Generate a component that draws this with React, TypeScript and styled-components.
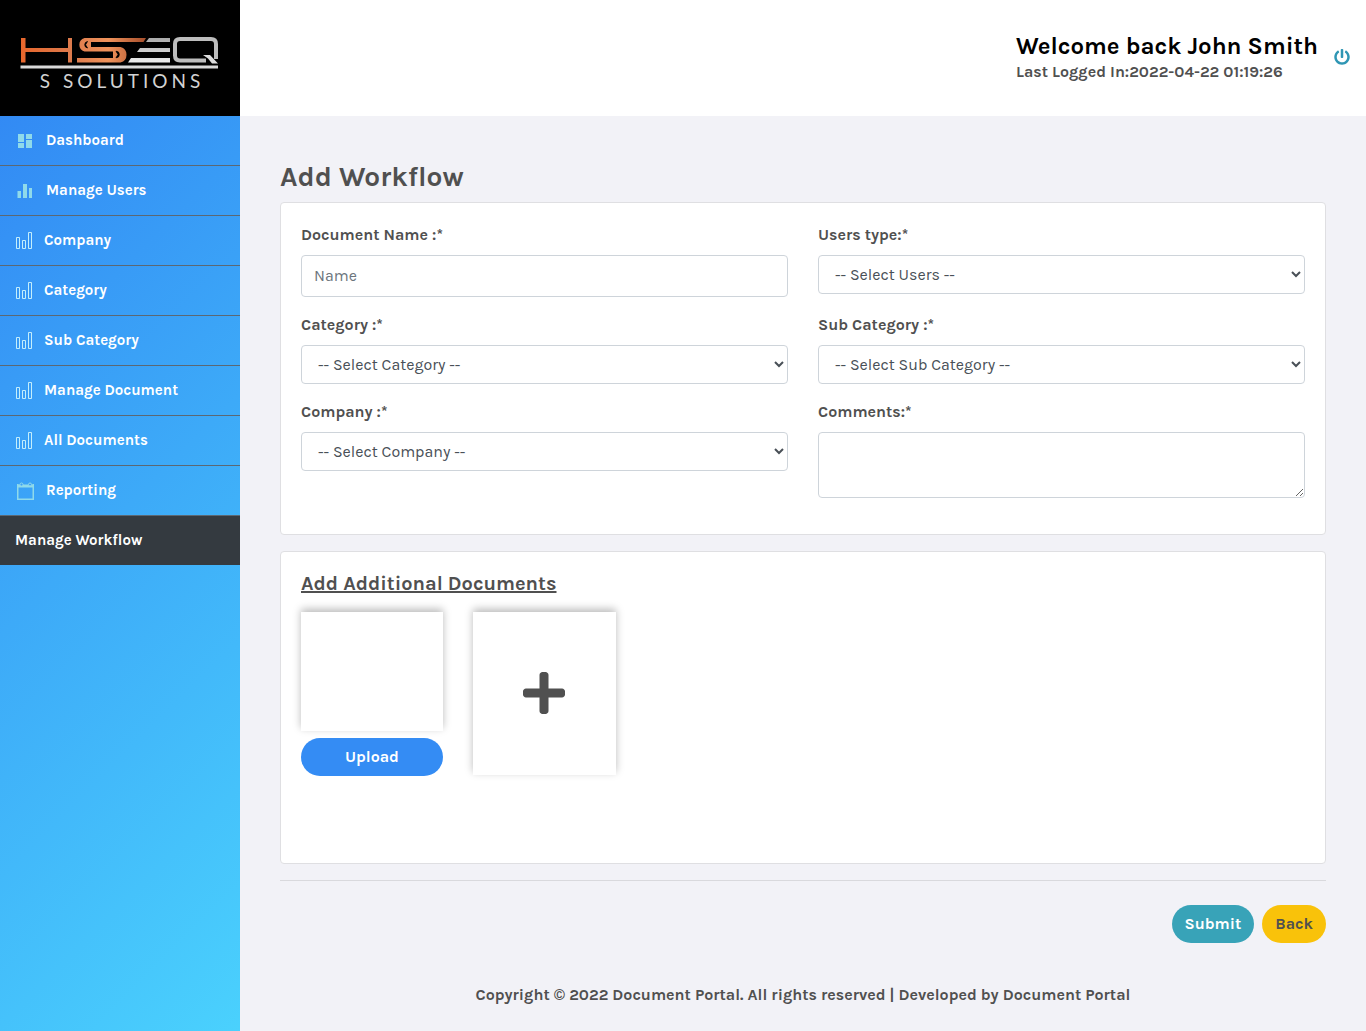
import React from "react";
import styled, { createGlobalStyle, css } from "styled-components";
import { FaPlus, FaPowerOff } from "react-icons/fa";

const GlobalStyle = createGlobalStyle`
  *, *::before, *::after { box-sizing: border-box; }
  body {
    margin: 0;
    background: #f2f2f7;
    color: #505050;
    font-family: Karla, Inter, "Liberation Sans", sans-serif;
    font-size: 16px;
    line-height: 24px;
  }
  button, input, select, textarea { font: inherit; }
`;

const Shell = styled.div`
  display: flex;
  min-height: 100vh;
`;

const Sidebar = styled.aside`
  flex: 0 0 240px;
  background: linear-gradient(135deg, #3083f3 0%, #4ad1fd 100%);
`;

const Brand = styled.a`
  display: flex;
  flex-direction: column;
  align-items: center;
  height: 116px;
  padding-top: 36px;
  background: #000;
  text-decoration: none;
`;

const BrandName = styled.span`
  padding-left: 4px;
  color: #d2d2d2;
  font-family: Lato, sans-serif;
  font-size: 19px;
  line-height: 22px;
  letter-spacing: 4px;
`;

const NavList = styled.ul`
  list-style: none;
  margin: 0;
  padding: 0;
`;

const NavItem = styled.li`
  & + & { border-top: 1px solid #5b6874; }
`;

const NavLink = styled.a<{ $active?: boolean; $wide?: boolean }>`
  display: flex;
  align-items: center;
  gap: ${(p) => (p.$wide ? 12 : 10)}px;
  height: 49px;
  padding: 0 15px 1px;
  color: #fff;
  font-size: 15px;
  font-weight: 700;
  text-decoration: none;
  background: ${(p) => (p.$active ? "#343a40" : "transparent")};
  svg { flex: none; margin-top: 2px; }
`;

const Main = styled.div`
  flex: 1;
  min-width: 0;
`;

const Header = styled.header`
  display: flex;
  justify-content: flex-end;
  align-items: center;
  gap: 16px;
  height: 116px;
  padding: 0 16px;
  background: #fff;
`;

const Welcome = styled.h2`
  margin: 0;
  color: #000;
  font-size: 24px;
  font-weight: 700;
  line-height: 28px;
`;

const LastLogin = styled.p`
  margin: 0;
  font-weight: 700;
`;

const PowerButton = styled.button`
  display: flex;
  padding: 0 0 2px;
  border: 0;
  background: none;
  color: #2f96b4;
`;

const Content = styled.main`
  padding: 44px 40px 0;
`;

const Title = styled.h1`
  margin: 0 0 8px;
  font-size: 28px;
  font-weight: 700;
  line-height: 34px;
`;

const Card = styled.section<{ $tall?: boolean }>`
  min-height: ${(p) => (p.$tall ? "313px" : "0")};
  margin-bottom: 16px;
  padding: 20px;
  border: 1px solid #dfdfe2;
  border-radius: 4px;
  background: #fff;
`;

const FormGrid = styled.form`
  display: grid;
  grid-template-columns: 1fr 1fr;
  column-gap: 30px;
`;

const Field = styled.div`
  display: flex;
  flex-direction: column;
  margin-bottom: 16px;
`;

const Label = styled.label`
  margin-bottom: 8px;
  font-weight: 700;
`;

const control = css`
  width: 100%;
  border: 1px solid #ced4da;
  border-radius: 4px;
  background: #fff;
  color: #495057;
`;

const TextInput = styled.input`
  ${control}
  height: 42px;
  padding: 6px 12px 8px;
  &::placeholder { color: #6c757d; opacity: 1; }
`;

const Select = styled.select`
  ${control}
  height: 39px;
  padding: 6px 0 6px 12px;
`;

const TextArea = styled.textarea`
  ${control}
  height: 66px;
  padding: 6px 12px;
  resize: vertical;
`;

const SubTitle = styled.h3`
  margin: 0 0 16px;
  font-size: 20px;
  font-weight: 700;
  line-height: 24px;
  text-decoration: underline;
`;

const Documents = styled.div`
  display: flex;
  align-items: flex-start;
  gap: 30px;
`;

const DocumentSlot = styled.div`
  display: flex;
  flex-direction: column;
  gap: 7px;
  width: 142px;
`;

const tile = css`
  border: 0;
  background: #fff;
  box-shadow: 0 -3px 8px rgba(0, 0, 0, 0.27);
`;

const Preview = styled.div`
  ${tile}
  height: 119px;
`;

const AddTile = styled.button`
  ${tile}
  display: flex;
  align-items: center;
  justify-content: center;
  width: 143px;
  height: 163px;
  padding: 0 1px 2px 0;
  color: #505050;
`;

const Pill = styled.button<{ $bg: string; $dark?: boolean }>`
  height: 38px;
  padding: 0 13px;
  border: 0;
  border-radius: 19px;
  background: ${(p) => p.$bg};
  color: ${(p) => (p.$dark ? "#505050" : "#fff")};
  font-weight: 700;
`;

const Actions = styled.div`
  display: flex;
  justify-content: flex-end;
  gap: 8px;
  padding-top: 24px;
  border-top: 1px solid #d9d9dd;
`;

const Footer = styled.footer`
  padding: 40px 0 24px;
  font-weight: 700;
  text-align: center;
`;

function Logo() {
  return (
    <svg width="200" height="34" viewBox="20 36 200 34" aria-label="HSEQ" role="img">
      <defs>
        <linearGradient id="copper" gradientUnits="userSpaceOnUse" x1="20" y1="0" x2="146" y2="0">
          <stop offset="0" stopColor="#e8662b" />
          <stop offset="0.4" stopColor="#dc7a4c" />
          <stop offset="0.7" stopColor="#f0935b" />
          <stop offset="1" stopColor="#a64e2b" />
        </linearGradient>
        <linearGradient id="steel" x1="0" y1="0" x2="0" y2="1">
          <stop offset="0" stopColor="#aaa" />
          <stop offset="1" stopColor="#eee" />
        </linearGradient>
      </defs>
      <path d="M21 38h4.500v10h42.500v-10h4v24.500h-4v-10.500h-42.500v10.500h-4.500z" fill="url(#copper)" />
      <path d="M146 38H84.500a7 7 0 0 0 0 13.500H113V58H77v4.500H120.500a8 8 0 0 0 0-15.500H91V42H143.500z" fill="url(#copper)" />
      <path d="M87.500 41.500a3.300 3.300 0 0 0 0 6.500l-2-3.200zM116 51.200a3.300 3.300 0 0 1 0 6.600l2-3.300z" fill="#000" stroke="#000" strokeWidth="0.800" />
      <path d="M149 38h21v4h-24zM140 48h30v4h-33zM131 58h39v4.500h-42z" fill="url(#steel)" />
      <path d="M206 60.500H180q-5 0-5-5V44q0-5 5-5H211q5 0 5 5v15" fill="none" stroke="#bdbdbd" strokeWidth="4" />
      <path d="M203 55h7l8 8.500h-6l-4-5z" fill="#ddd" />
      <path d="M20.500 65.500H218v3H20.500z" fill="#d9d9d9" />
    </svg>
  );
}

function Tiles() {
  return (
    <svg width="19" height="20" viewBox="0 0 19 20" fill="#8fdaea">
      <path d="M3 3h6v8h-6zM11 3h6v5h-6zM3 12h6v5h-6zM11 9h6v8h-6z" />
    </svg>
  );
}

function BarsOutline() {
  return (
    <svg width="19" height="20" viewBox="0 0 19 20" fill="none" stroke="#c4eefb">
      <path d="M1.500 6.500h3v11h-3zM7.500 9.500h3v8h-3zM13.500 1.500h3v16h-3z" />
    </svg>
  );
}

function BarsSolid() {
  return (
    <svg width="19" height="20" viewBox="0 0 19 20" fill="#8fdaea">
      <path d="M2.500 10h3.500v7h-3.500zM8 3h4v14h-4zM14 7h3v10h-3z" />
    </svg>
  );
}

function Calendar() {
  return (
    <svg width="19" height="20" viewBox="0 0 19 20" fill="none" stroke="#8fdaea">
      <path d="M2.750 3v15.250h15.500V3" strokeWidth="1.500" />
      <path d="M2 5h17" strokeWidth="3" />
      <circle cx="6.500" cy="3.500" r="1.500" fill="#3c9ff8" />
      <circle cx="15" cy="3.500" r="1.500" fill="#3c9ff8" />
    </svg>
  );
}

const navigation = [
  { label: "Dashboard", icon: <Tiles />, wide: true },
  { label: "Manage Users", icon: <BarsSolid />, wide: true },
  { label: "Company", icon: <BarsOutline /> },
  { label: "Category", icon: <BarsOutline /> },
  { label: "Sub Category", icon: <BarsOutline /> },
  { label: "Manage Document", icon: <BarsOutline /> },
  { label: "All Documents", icon: <BarsOutline /> },
  { label: "Reporting", icon: <Calendar />, wide: true },
  { label: "Manage Workflow", active: true },
];

function SelectField({ id, label, placeholder }: { id: string; label: string; placeholder: string }) {
  return (
    <Field>
      <Label htmlFor={id}>{label}</Label>
      <Select id={id}>
        <option>{placeholder}</option>
      </Select>
    </Field>
  );
}

export default function App() {
  return (
    <>
      <GlobalStyle />
      <Shell>
        <Sidebar>
          <Brand href="#">
            <Logo />
            <BrandName>S SOLUTIONS</BrandName>
          </Brand>
          <nav>
            <NavList>
              {navigation.map((item) => (
                <NavItem key={item.label}>
                  <NavLink href="#" $active={item.active} $wide={item.wide}>
                    {item.icon}
                    {item.label}
                  </NavLink>
                </NavItem>
              ))}
            </NavList>
          </nav>
        </Sidebar>
        <Main>
          <Header>
            <div>
              <Welcome>Welcome back John Smith</Welcome>
              <LastLogin>Last Logged In:2022-04-22 01:19:26</LastLogin>
            </div>
            <PowerButton aria-label="Log out">
              <FaPowerOff size={16} />
            </PowerButton>
          </Header>
          <Content>
            <Title>Add Workflow</Title>
            <Card>
              <FormGrid>
                <Field>
                  <Label htmlFor="name">Document Name :*</Label>
                  <TextInput id="name" placeholder="Name" />
                </Field>
                <SelectField id="users" label="Users type:*" placeholder="-- Select Users --" />
                <SelectField id="category" label="Category :*" placeholder="-- Select Category --" />
                <SelectField id="subcategory" label="Sub Category :*" placeholder="-- Select Sub Category --" />
                <SelectField id="company" label="Company :*" placeholder="-- Select Company --" />
                <Field>
                  <Label htmlFor="comments">Comments:*</Label>
                  <TextArea id="comments" />
                </Field>
              </FormGrid>
            </Card>
            <Card $tall>
              <SubTitle>Add Additional Documents</SubTitle>
              <Documents>
                <DocumentSlot>
                  <Preview />
                  <Pill type="button" $bg="#348cf4">Upload</Pill>
                </DocumentSlot>
                <AddTile type="button" aria-label="Add document">
                  <FaPlus size={48} />
                </AddTile>
              </Documents>
            </Card>
            <Actions>
              <Pill type="submit" $bg="#38a3b8">Submit</Pill>
              <Pill type="button" $bg="#f9c20a" $dark>Back</Pill>
            </Actions>
            <Footer>Copyright © 2022 Document Portal. All rights reserved | Developed by Document Portal</Footer>
          </Content>
        </Main>
      </Shell>
    </>
  );
}
